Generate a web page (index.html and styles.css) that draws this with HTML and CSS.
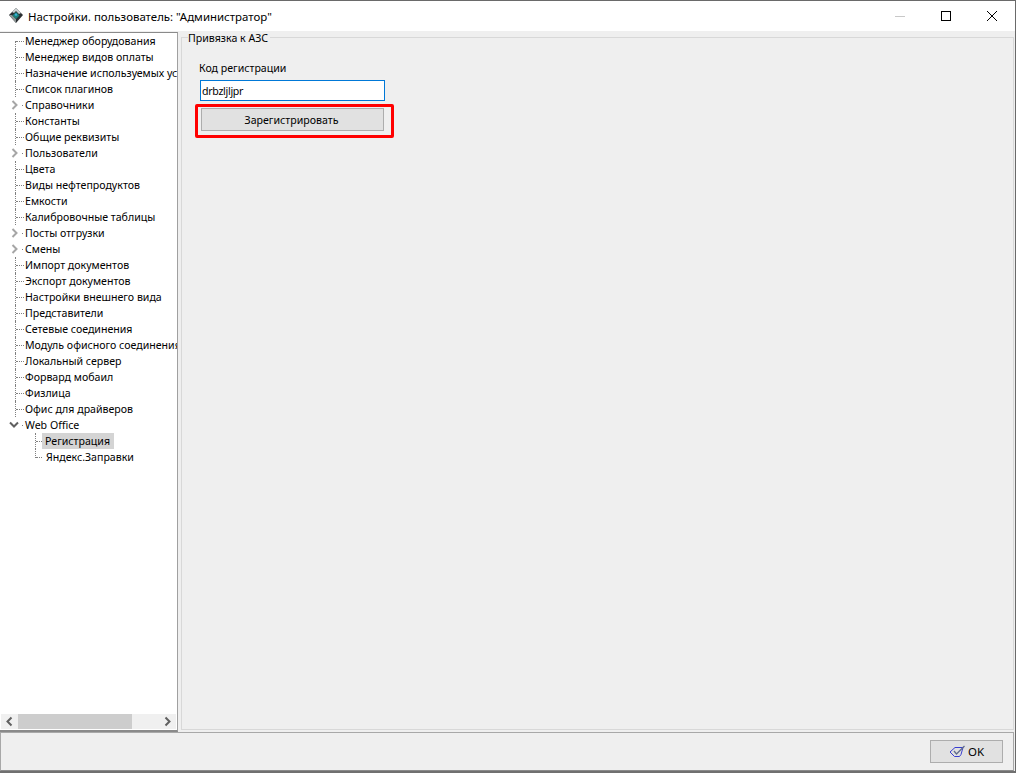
FILE: index.html
```html
<!DOCTYPE html>
<html lang="ru">
<head>
<meta charset="utf-8">
<title>Настройки</title>
<link rel="stylesheet" href="styles.css">
</head>
<body>
<div class="window">
  <header class="titlebar">
    <svg class="app-icon" width="16" height="16" viewBox="0 0 16 16"><path d="M8 0 15 7 8 15 1 7Z" fill="#2b2f33"/><path d="M1 7 8 15 8 11 4 7Z" fill="#8c9494"/><path d="M8 0 4 4 6 5 8 3 11 6 13 5Z" fill="#c9cfd0"/><path d="M8 4 11.5 7.5 8 11 4.5 7.5Z" fill="#17807a"/><path d="M8 5 9.5 7 8 8 6.5 7Z" fill="#3fb0e0"/></svg>
    <span class="title">Настройки. пользователь: "Администратор"</span>
    <div class="controls">
      <svg width="46" height="31" viewBox="0 0 46 31"><path d="M18 15.5H28" stroke="#c8c8c8" fill="none"/></svg>
      <svg width="46" height="31" viewBox="0 0 46 31"><rect x="18.5" y="10.5" width="9" height="9" stroke="#000" fill="none"/></svg>
      <svg width="46" height="31" viewBox="0 0 46 31"><path d="M18 10 28 20M28 10 18 20" stroke="#000" fill="none"/></svg>
    </div>
  </header>
  <main class="main">
    <aside class="tree-panel">
      <ul class="tree">
        <li class="row"><span class="label">Менеджер оборудования</span></li>
        <li class="row"><span class="label">Менеджер видов оплаты</span></li>
        <li class="row"><span class="label">Назначение используемых устройств</span></li>
        <li class="row"><span class="label">Список плагинов</span></li>
        <li class="row has-arrow"><svg class="arrow" width="8" height="10" viewBox="0 0 8 10"><path d="M1.5 1 5.5 5 1.5 9" stroke="#a6a6a6" stroke-width="2" fill="none"/></svg><span class="label">Справочники</span></li>
        <li class="row"><span class="label">Константы</span></li>
        <li class="row"><span class="label">Общие реквизиты</span></li>
        <li class="row has-arrow"><svg class="arrow" width="8" height="10" viewBox="0 0 8 10"><path d="M1.5 1 5.5 5 1.5 9" stroke="#a6a6a6" stroke-width="2" fill="none"/></svg><span class="label">Пользователи</span></li>
        <li class="row"><span class="label">Цвета</span></li>
        <li class="row"><span class="label">Виды нефтепродуктов</span></li>
        <li class="row"><span class="label">Емкости</span></li>
        <li class="row"><span class="label">Калибровочные таблицы</span></li>
        <li class="row has-arrow"><svg class="arrow" width="8" height="10" viewBox="0 0 8 10"><path d="M1.5 1 5.5 5 1.5 9" stroke="#a6a6a6" stroke-width="2" fill="none"/></svg><span class="label">Посты отгрузки</span></li>
        <li class="row has-arrow"><svg class="arrow" width="8" height="10" viewBox="0 0 8 10"><path d="M1.5 1 5.5 5 1.5 9" stroke="#a6a6a6" stroke-width="2" fill="none"/></svg><span class="label">Смены</span></li>
        <li class="row"><span class="label">Импорт документов</span></li>
        <li class="row"><span class="label">Экспорт документов</span></li>
        <li class="row"><span class="label">Настройки внешнего вида</span></li>
        <li class="row"><span class="label">Представители</span></li>
        <li class="row"><span class="label">Сетевые соединения</span></li>
        <li class="row"><span class="label">Модуль офисного соединения</span></li>
        <li class="row"><span class="label">Локальный сервер</span></li>
        <li class="row"><span class="label">Форвард мобаил</span></li>
        <li class="row"><span class="label">Физлица</span></li>
        <li class="row"><span class="label">Офис для драйверов</span></li>
        <li class="row has-arrow"><svg class="arrow open" width="10" height="8" viewBox="0 0 10 8"><path d="M1 1.5 5 5.5 9 1.5" stroke="#606060" stroke-width="2" fill="none"/></svg><span class="label">Web Office</span></li>
        <li class="row child"><span class="label selected">Регистрация</span></li>
        <li class="row child"><span class="label yandex">Яндекс.Заправки</span></li>
      </ul>
      <div class="hscroll">
        <svg class="sb-btn" width="17" height="15" viewBox="0 0 17 15"><path d="M10.5 3.5 6.5 7.5 10.5 11.5" stroke="#606060" stroke-width="2" fill="none"/></svg>
        <div class="sb-track"><div class="sb-thumb"></div></div>
        <svg class="sb-btn" width="17" height="15" viewBox="0 0 17 15"><path d="M6.5 3.5 10.5 7.5 6.5 11.5" stroke="#606060" stroke-width="2" fill="none"/></svg>
      </div>
    </aside>
    <section class="content">
      <fieldset class="group">
        <legend class="group-title">Привязка к АЗС</legend>
        <label class="field-label" for="code">Код регистрации</label>
        <input class="field-input" id="code" value="drbzljljpr">
        <div class="highlight"><button class="reg-btn" type="button">Зарегистрировать</button></div>
      </fieldset>
    </section>
  </main>
  <footer class="footer">
    <button class="ok-btn" type="button">
      <svg width="17" height="13" viewBox="0 0 17 13"><path d="M1 7 6 2.5H14L12 9.5 10.5 11.5H5.5Z" stroke="#3a3fd0" fill="none"/><path d="M5 6 7.5 9 15.5 1" stroke="#5f6b8c" stroke-width="1.3" fill="none"/></svg>
      <span>OK</span>
    </button>
  </footer>
</div>
</body>
</html>
```
FILE: styles.css
```css
* { box-sizing: border-box; }
html, body { margin: 0; height: 100%; }
body {
  background: #fff;
  font-family: "Noto Sans", "Liberation Sans", sans-serif;
  font-size: 10.6px;
  color: #000;
  overflow: hidden;
}
.window {
  width: 1016px;
  height: 773px;
  display: flex;
  flex-direction: column;
  border-top: 1px solid #6a6a6a;
  border-right: 1px solid #6a6a6a;
  border-bottom: 2px solid #707070;
  background: #efefef;
}
.titlebar {
  height: 30px;
  flex: none;
  display: flex;
  align-items: center;
  background: #fff;
  padding-left: 8px;
}
.app-icon { margin-right: 4px; }
.title { font-size: 11.45px; color: #000; }
.controls { margin-left: auto; display: flex; }
.controls svg { display: block; }
.main { flex: 1; display: flex; min-height: 0; }
.tree-panel {
  width: 178px;
  flex: none;
  background: #fff;
  display: flex;
  flex-direction: column;
  margin-top: 1px;
  padding: 0 0 1px 1px;
  border-top: 1px solid #8a8a8a;
  border-right: 1px solid #a0a0a0;
  border-bottom: 2px solid #8a8a8a;
}
.tree {
  flex: 1;
  list-style: none;
  margin: 0;
  padding: 0;
  overflow: hidden;
}
.row {
  position: relative;
  height: 16px;
  line-height: 16px;
  padding-left: 23px;
  white-space: nowrap;
}
.row::before {
  content: "";
  position: absolute;
  left: 14px;
  top: 0;
  bottom: 0;
  border-left: 1px dotted #808080;
}
.row:first-child::before { top: 8px; }
.row::after {
  content: "";
  position: absolute;
  left: 15px;
  width: 8px;
  top: 8px;
  border-top: 1px dotted #808080;
}
.row.has-arrow::before { display: none; }
.row.has-arrow::after { left: 21px; width: 1px; }
.row.child { padding-left: 41px; }
.row.child::before { left: 34px; }
.row.child::after { left: 35px; width: 6px; }
.row.child:last-child::before { bottom: 7px; }
.arrow { position: absolute; left: 10px; top: 3px; }
.arrow.open { left: 8px; top: 4px; }
.label { display: inline-block; padding: 0 1px; height: 16px; }
.row.child .label { padding: 0 3px; }
.row.child .label.selected { background: #d4d4d4; padding: 0 4px 0 3px; }
.row.child .label.yandex { padding-left: 4px; }
.hscroll {
  height: 15px;
  flex: none;
  display: flex;
  background: #f0f0f0;
  margin-right: 1px;
}
.sb-btn { display: block; flex: none; }
.sb-track { flex: 1; }
.sb-thumb { width: 114px; height: 15px; background: #cdcdcd; }
.content {
  flex: 1;
  margin: 0 1px 2px 3px;
  background: #efefef;
  min-width: 0;
}
.group {
  height: 100%;
  margin: 0;
  padding: 17px 0 0 16px;
  border: 1px solid #d8d8d8;
  min-width: 0;
}
.group-title {
  padding: 0 2px 0 0;
  margin-left: -10px;
  height: 12px;
  line-height: 14px;
}
.field-label { display: block; line-height: 16px; margin-left: 1px; }
.field-input {
  display: block;
  width: 185px;
  height: 21px;
  margin: 4px 0 0 2px;
  padding: 0 1px;
  border: 1px solid #0078d7;
  background: #fff;
  font: inherit;
  letter-spacing: -0.3px;
  color: #000;
  border-radius: 0;
  outline: 0;
}
.highlight {
  width: 199px;
  height: 34px;
  margin: 3px 0 0 -3px;
  border: 3px solid #f00;
  border-radius: 2px;
  padding: 1px 7px 3px 3px;
}
.reg-btn {
  display: block;
  width: 183px;
  height: 23px;
  border: 1px solid #adadad;
  background: #e1e1e1;
  font: inherit;
  color: #000;
  padding: 0 2px 0 0;
}
.footer {
  height: 39px;
  flex: none;
  background: #efefef;
  display: flex;
  align-items: center;
  justify-content: flex-end;
  padding-right: 10px;
  margin-right: 1px;
  border: 1px solid #a8a8a8;
  border-bottom-color: #8a8a8a;
}
.ok-btn {
  width: 73px;
  height: 23px;
  border: 1px solid #adadad;
  background: #e1e1e1;
  display: flex;
  align-items: center;
  justify-content: center;
  gap: 2px;
  padding: 0;
  font-family: inherit;
  font-size: 11.5px;
  color: #000;
}
```
